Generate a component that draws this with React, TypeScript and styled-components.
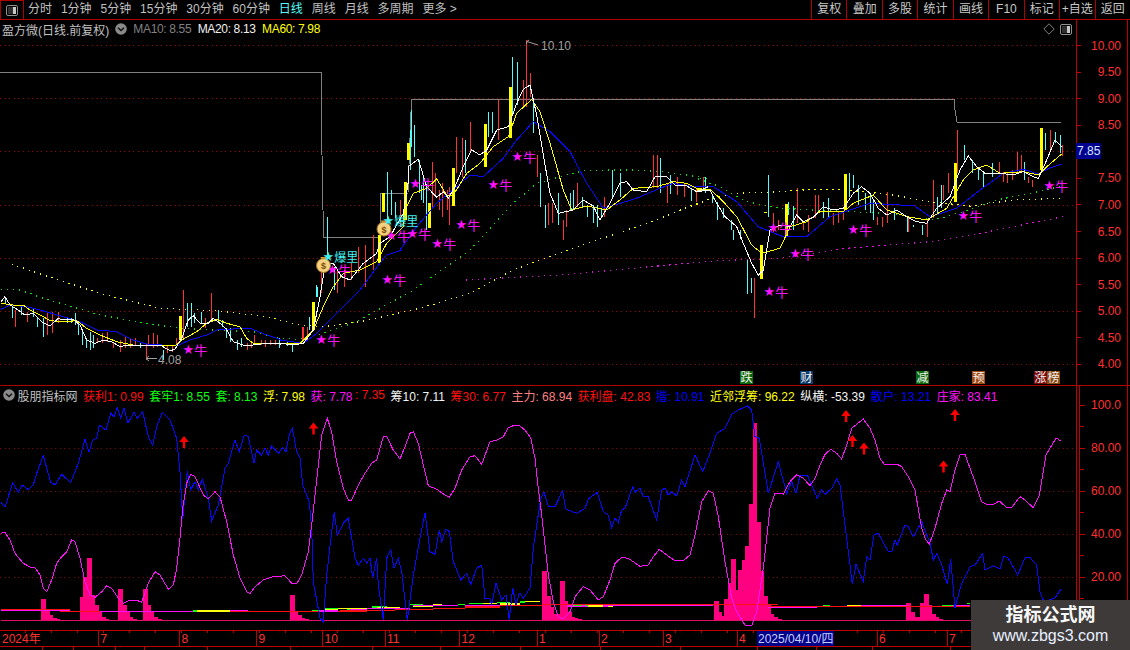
import React from "react";
import styled, { createGlobalStyle } from "styled-components";

type P = [number, number];
type W = [number, number, number];

const conv = (pts: number[][], ox: number, oy: number, xmin = -1e9, xmax = 1e9): P[] =>
  pts.filter((p) => p[0] >= xmin && p[0] <= xmax).map((p) => [ox + p[0] / 3, oy + p[1] / 3] as P);
const pts = (list: P[]) => list.map((p) => `${p[0].toFixed(1)},${p[1].toFixed(1)}`).join(" ");
const wicks = (list: W[], ox: number, oy: number) =>
  list.map((w) => `M${(ox + w[0] / 3).toFixed(0)}.5 ${(oy + w[1] / 3).toFixed(1)}V${(oy + w[2] / 3).toFixed(1)}`).join("");

/* ---------- price pane data ---------- */
const white = [
  ...conv([[3,125],[15,110],[30,135],[55,150],[75,165],[100,160],[125,185],[150,198],[175,175],[190,180],[220,178],[240,195],[260,240],[285,250],[310,240],[335,245],[360,260],[385,255],[425,258],[445,255],[480,255],[510,272],[525,268],[545,235],[565,180],[580,167],[600,190],[625,190],[640,175],[660,190],[680,210],[700,245],[730,255],[760,255],[800,250],[840,252]], 0, 260),
  ...conv([[0,640],[40,645],[70,640],[100,600],[120,500],[135,405],[160,400],[185,440],[210,450],[250,400],[290,370],[300,340],[330,320],[370,250],[385,155]], 280, 130),
  ...conv([[85,380],[115,358],[140,440],[170,472],[190,455],[205,475],[225,440],[250,380],[275,330],[300,345],[320,330],[350,270],[385,260],[410,190],[430,148],[450,135],[470,225],[490,345],[510,460],[535,520],[580,510],[610,480],[640,498],[660,540],[690,490],[720,430],[740,425],[760,450],[800,455],[825,410],[860,410],[885,435],[920,438],[950,455],[985,440]], 380, 40),
  ...conv([[50,185],[90,180],[110,220],[135,260],[170,290],[190,340],[215,400],[235,435],[250,420],[270,300],[300,285],[330,290],[350,255],[370,275],[400,262],[430,230],[460,240],[490,235],[520,190],[545,170],[570,190],[595,235],[620,255],[650,240],[680,260],[710,275],[740,280],[770,235],[810,200],[840,120],[865,78],[890,110],[915,130],[960,130],[1000,135],[1030,125],[1060,140],[1075,145],[1100,90],[1125,30],[1145,50]], 680, 130),
];
const yellow = [
  ...conv([[3,130],[40,135],[70,135],[90,150],[130,170],[150,182],[190,185],[230,182],[260,205],[300,225],[350,245],[400,255],[440,258],[480,255],[525,258],[545,240],[590,215],[620,190],[650,178],[680,190],[720,200],[740,235],[760,250],[840,252]], 0, 260),
  ...conv([[0,640],[60,640],[100,600],[130,530],[160,470],[190,430],[240,420],[290,395],[320,340],[370,290]], 280, 130),
  ...conv([[70,520],[100,460],[140,445],[170,417],[200,465],[220,465],[260,400],[300,370],[340,320],[385,290],[410,220],[455,178],[480,215],[510,310],[550,450],[575,510],[620,498],[680,510],[720,480],[760,445],[830,440],[880,425],[920,430],[950,445],[985,450]], 380, 40),
  ...conv([[50,180],[90,178],[125,210],[170,260],[215,345],[245,370],[300,355],[330,290],[380,275],[420,245],[490,245],[520,220],[580,195],[620,240],[680,260],[740,270],[800,235],[850,150],[880,120],[920,105],[960,130],[1030,125],[1075,135],[1100,110],[1145,72]], 680, 130),
];
const blue = [
  ...conv([[3,148],[30,135],[80,140],[120,150],[190,170],[240,185],[290,210],[350,215],[400,240],[440,252],[530,258],[570,240],[620,225],[650,210],[700,207],[750,205],[800,225],[840,238]], 0, 260),
  ...conv([[0,630],[70,640],[110,610],[170,550],[240,480],[300,400],[320,375],[365,360]], 280, 130),
  ...conv([[60,630],[110,560],[170,490],[230,440],[270,405],[310,410],[370,355],[410,300],[460,245],[510,275],[570,335],[620,430],[670,505],[720,490],[770,475],[840,445],[880,430],[940,440],[985,440]], 380, 40),
  ...conv([[50,170],[100,170],[170,215],[235,290],[310,320],[380,320],[450,260],[510,240],[570,220],[660,225],[700,225],[750,260],[830,235],[900,180],[970,130],[1030,118],[1075,132],[1100,118],[1145,102]], 680, 130),
];
const greenDots = [
  ...conv([[3,88],[60,90],[130,115],[300,165],[440,190],[540,205],[640,210],[760,215],[840,235]], 0, 260),
  ...conv([[50,628],[130,610],[230,575],[400,480],[550,375]], 280, 130),
  ...conv([[270,630],[400,490],[470,430],[540,410],[610,392],[690,390],[760,390],[850,395],[985,415]], 380, 40),
  ...conv([[50,145],[120,170],[200,215],[300,235],[400,240],[620,250],[760,270],[850,245],[950,210],[1100,180],[1150,165]], 680, 130),
];
const yellowDots = [
  ...conv([[35,12],[130,45],[300,100],[480,145],[650,152],[800,170],[900,195]], 0, 260),
  ...conv([[130,590],[240,575],[420,535],[570,490],[700,420],[840,368]], 280, 130),
  ...conv([[800,550],[985,480]], 380, 40),
  ...conv([[0,240],[80,210],[160,190],[300,185],[400,178],[500,180],[640,195],[750,215],[870,228],[1000,210],[1150,205]], 680, 130),
];
const purpleDots: P[] = [[466, 280], [560, 275], [680, 264], ...conv([[120,392],[300,385],[500,355],[750,335],[900,310],[1050,280],[1150,260]], 680, 130)];
const grayLine: P[] = [[0,72],[321,72],[321,100],[322,155],[323,210],[323.5,237],[380,237],[381,193],[408,193],[409,165],[411,112],[411.6,99.3],[954,99.3],[955,110],[957,122],[1061,122]];

const redZ9: W[] = [[45,150,200],[80,155,185],[142,155,225],[155,155,220],[175,155,190],[290,235,250],[305,220,250],[320,215,245],[340,245,265],[360,240,275],[375,230,265],[390,235,265],[405,235,255],[437,250,300],[445,225,255],[458,220,265],[470,225,260],[500,255,280],[515,255,275],[528,235,260],[550,90,240],[615,175,205],[633,100,185],[740,250,270],[752,245,265],[762,225,255],[782,240,255],[795,240,260],[810,240,255],[825,240,255],[908,200,240],[920,205,235],[962,30,100]];
const cyanZ9: W[] = [[15,110,130],[37,135,175],[62,140,165],[100,145,170],[110,170,200],[130,175,230],[200,175,190],[212,175,190],[225,160,195],[235,185,225],[247,215,255],[258,235,265],[270,215,270],[280,225,265],[420,245,265],[488,270,300],[562,130,200],[572,130,200],[583,160,190],[603,155,190],[655,150,190],[667,180,200],[677,205,235],[690,205,245],[710,240,270],[723,235,260],[838,235,265],[862,245,258],[877,250,275],[948,75,110]];
const redZ7: W[] = [[67,590,635],[80,590,630],[122,425,480],[172,420,490],[193,420,470],[213,400,450],[235,350,430],[255,345,470],[278,315,420],[360,210,290],[457,95,230],[466,130,200],[478,180,240],[487,230,260],[500,180,240],[508,228,285]];
const cyanZ7: W[] = [[37,645,665],[88,560,600],[110,470,500],[142,262,400],[163,410,480],[320,125,270],[333,180,255],[345,215,265],[390,0,120],[403,0,80],[422,165,210],[437,165,300]];
const redZ12: W[] = [[438,0,200],[430,120,200],[450,100,170],[355,180,300],[270,245,340],[245,295,410],[228,290,400],[207,440,555],[187,430,530],[157,365,470],[472,345,410],[505,490,555],[515,490,550],[548,540,600],[557,510,560],[590,430,500],[673,470,530],[820,345,445],[830,345,445],[862,430,490],[890,410,465],[912,430,470]];
const cyanZ12: W[] = [[397,50,225],[410,65,195],[460,175,280],[325,215,290],[335,215,280],[255,300,400],[130,410,490],[118,360,460],[103,255,340],[93,210,320],[480,400,500],[494,495,565],[535,460,555],[570,460,510],[578,450,510],[605,470,505],[620,495,530],[640,495,550],[650,495,560],[662,505,530],[695,390,470],[720,400,470],[840,355,460],[870,405,462]];
const redZ8: W[] = [[47,175,215],[68,140,175],[223,445,565],[278,250,310],[295,270,300],[350,175,280],[370,275,300],[385,255,305],[405,195,265],[415,195,250],[460,250,285],[475,245,280],[490,250,270],[592,260,285],[605,260,290],[620,185,280],[685,265,305],[740,270,320],[760,150,265],[790,165,210],[805,130,190],[832,0,130],[958,95,130],[970,125,155],[980,130,160],[995,120,150],[1010,65,130],[1023,75,125],[1043,140,160],[1055,150,170],[1110,0,60],[1147,45,78]];
const cyanZ8: W[] = [[33,178,213],[75,140,190],[97,195,218],[110,215,270],[130,235,265],[152,270,300],[160,300,330],[180,300,328],[201,390,492],[214,445,490],[265,135,260],[325,215,255],[340,228,300],[430,215,265],[445,205,265],[507,130,200],[520,135,175],[535,165,225],[555,190,240],[570,195,250],[580,210,270],[643,235,270],[680,265,305],[700,285,290],[727,285,315],[770,200,255],[783,165,235],[853,45,90],[875,90,130],[893,115,150],[908,130,170],[935,100,140],[1033,95,150],[1095,10,60],[1125,5,40],[1140,15,70]];
const redPath = wicks(redZ9, 0, 260) + wicks(redZ7, 280, 130) + wicks(redZ12, 380, 40) + wicks(redZ8, 680, 130);
const cyanPath = wicks(cyanZ9, 0, 260) + wicks(cyanZ7, 280, 130) + wicks(cyanZ12, 380, 40) + wicks(cyanZ8, 680, 130);

const signalBars: [number, number, number][] = [[180,316,340],[313,302,330],[379,235,263],[383,193,212],[405,182,220],[408,143,160],[429,203,228],[453,168,206],[485,124,167],[509.5,87,138],[761,245,279],[786,204,237],[845,174,210],[955,163,202],[1041,128,170]];
const bullMarks: P[] = [[387,279],[321,339],[332,269],[391,235],[412,233],[415,183],[437,243],[461,224],[493,184],[517,156],[773,227],[769,291],[795,253],[853,229],[963,215],[1049,185],[188,349]];
const stockGrid = [45.5, 98.5, 151.5, 205.5, 258.5, 311.5, 364.5];
const priceTicks = ["10.00","9.50","9.00","8.50","8.00","7.50","7.00","6.50","6.00","5.50","5.00","4.50","4.00"];
const tagBadges: { x: number; t: string; c: string }[] = [
  { x: 740, t: "跌", c: "#0a6a0a" }, { x: 800, t: "财", c: "#0b3a6b" }, { x: 916, t: "减", c: "#0a6a0a" },
  { x: 972, t: "预", c: "#a24a12" }, { x: 1034, t: "涨", c: "#7a0a0a" }, { x: 1047, t: "榜", c: "#8a4a14" },
];

/* ---------- indicator pane data ---------- */
const blueOsc = [
  ...conv([[3,322],[15,337],[38,263],[55,292],[67,270],[85,284],[100,270],[110,235],[130,182],[152,262],[165,270],[185,238],[212,263],[235,205],[255,133],[267,172],[278,135],[290,130],[298,90],[318,105],[332,55],[342,65],[352,38],[362,70],[372,40],[384,85],[402,52],[412,70],[428,50],[445,125],[458,152],[470,95],[487,52],[510,75],[530,130],[540,230],[548,372],[562,228],[572,285],[585,260],[595,285],[607,252],[625,310],[635,378],[655,330],[675,220],[685,205],[705,135],[718,170],[733,120],[745,125],[762,205],[770,165],[785,180],[795,160],[805,180],[815,152],[835,175],[848,158],[858,170],[868,118],[877,100],[890,170],[900,190],[908,270],[928,320],[935,400],[940,560],[960,670],[970,680],[980,540],[995,410],[1003,352],[1012,420],[1030,385],[1045,370],[1065,490],[1075,510],[1090,490],[1100,505],[1110,490],[1118,548],[1130,488],[1135,570],[1150,675],[1160,490],[1172,463],[1182,520],[1195,490],[1205,530],[1222,675],[1240,540],[1260,430],[1275,355],[1290,470],[1305,478],[1318,405],[1325,440],[1338,403],[1348,410],[1360,500],[1382,555],[1400,535],[1412,568],[1430,520],[1445,510],[1455,610],[1470,612],[1475,630],[1488,565],[1505,615],[1518,600],[1528,675],[1538,578],[1548,630],[1558,595]], 0, 395),
  ...conv([[0,595],[10,610],[30,580],[40,460],[62,310],[72,292],[85,333],[105,335],[128,287],[137,342],[170,355],[195,340],[205,312],[232,292],[250,350],[265,360],[275,398],[285,370],[295,383],[305,345],[315,340],[338,275],[345,292],[360,280],[370,305],[385,305],[410,375],[425,285],[435,280],[445,300],[455,290],[470,303],[485,255],[495,275],[525,180],[548,230],[570,175],[590,115],[615,100],[635,58],[655,45],[670,38],[682,32],[695,45],[705,125],[718,130],[745,295],[775,200],[800,295],[815,260],[828,295],[840,240],[862,240],[875,270],[892,310],[905,285],[915,298],[935,280],[950,252],[960,270],[980,430],[997,568],[1008,508],[1030,560],[1040,485],[1050,495],[1062,420],[1075,415],[1105,470],[1115,470],[1125,435],[1132,450],[1155,390],[1165,395],[1180,425],[1205,380],[1230,445],[1240,495],[1250,475],[1265,510],[1282,568],[1292,492],[1305,638],[1325,565],[1350,515],[1365,510],[1388,475],[1395,525],[1420,512],[1440,522],[1452,483],[1465,490],[1482,520],[1493,540],[1515,488],[1530,488],[1550,510],[1560,590]], 520, 395),
  [1044, 602] as P, [1055, 598] as P, [1061, 589] as P,
];
const magentaOsc = [
  ...conv([[3,415],[15,412],[30,435],[45,475],[70,505],[90,516],[105,518],[120,540],[130,580],[140,590],[155,555],[170,505],[185,485],[200,470],[215,435],[225,440],[240,490],[255,560],[270,600],[285,607],[305,590],[320,572],[335,580],[355,610],[370,625],[385,618],[410,616],[425,622],[445,565],[465,530],[480,540],[505,583],[520,570],[530,520],[540,430],[548,340],[560,265],[572,238],[585,245],[610,300],[625,312],[645,290],[660,305],[680,380],[700,480],[720,550],[740,590],[750,596],[765,575],[790,555],[815,546],[855,542],[875,565],[890,566],[905,540],[925,470],[935,390],[955,210],[965,120],[982,70],[995,110],[1010,200],[1030,280],[1045,315],[1055,315],[1075,270],[1095,235],[1115,205],[1130,195],[1150,125],[1160,125],[1180,165],[1200,192],[1215,155],[1230,115],[1240,110],[1255,145],[1270,210],[1285,272],[1310,283],[1335,300],[1348,307],[1365,280],[1385,225],[1410,185],[1425,182],[1445,208],[1470,140],[1490,135],[1510,125],[1525,98],[1540,92],[1558,92]], 0, 395),
  ...conv([[15,105],[32,128],[45,190],[55,280],[65,360],[85,540],[100,620],[115,665],[130,672],[150,650],[165,605],[190,575],[210,585],[235,615],[250,605],[270,555],[285,505],[305,487],[325,490],[360,514],[385,510],[400,485],[418,463],[440,480],[465,497],[490,497],[510,480],[525,420],[545,320],[565,287],[580,295],[595,365],[615,500],[635,610],[650,650],[675,690],[695,692],[710,650],[730,520],[750,340],[765,295],[790,297],[810,260],[830,240],[850,250],[870,272],[885,250],[900,210],[915,178],[932,163],[950,175],[965,192],[980,150],[995,100],[1030,72],[1050,100],[1065,135],[1080,190],[1095,210],[1130,207],[1145,215],[1165,245],[1185,285],[1205,400],[1215,430],[1228,448],[1245,400],[1265,325],[1280,285],[1290,290],[1305,225],[1320,180],[1335,178],[1350,220],[1365,260],[1385,320],[1400,328],[1420,328],[1438,318],[1460,338],[1475,338],[1500,305],[1515,315],[1540,338],[1558,300]], 520, 395),
  [1046, 455] as P, [1056, 438] as P, [1061, 441] as P,
];
type Bar = [number, number, number];
const barsA: Bar[] = [[123,138,612],[138,150,645],[150,160,660],[160,170,668],[170,180,673],[240,250,605],[250,262,545],[262,275,490],[275,285,600],[285,297,630],[297,307,650],[307,317,665],[317,327,672],[354,369,582],[369,380,630],[380,390,650],[390,400,666],[400,411,672],[430,445,582],[445,453,630],[453,463,650],[463,475,665],[475,485,672],[870,885,600],[885,895,650],[895,905,660],[905,915,668],[915,927,673]];
const barsB: Bar[] = [[66,81,528],[81,93,603],[93,103,635],[103,120,657],[120,135,558],[135,145,618],[145,155,650],[155,165,665],[165,175,670],[175,185,673],[582,597,618],[597,606,650],[606,612,662],[612,625,612],[625,633,565],[633,648,492],[648,654,585],[654,666,525],[666,676,495],[676,687,453],[687,698,327],[698,711,84],[711,722,380],[722,732,527],[732,743,603],[743,753,630],[753,763,658],[763,775,667],[775,785,673],[1158,1172,624],[1172,1186,652],[1186,1199,666],[1199,1212,624],[1212,1226,597],[1226,1236,630],[1236,1248,658],[1248,1258,666],[1258,1270,673]];
type Seg = [number, number, number, string];
const R = "#ff1010", M = "#ff10ff", Y = "#ffff10", G = "#10ff10";
const segsA: Seg[] = [[180,935,649,R],[3,210,645,R],[3,210,647,M],[300,580,649,M],[580,690,648,Y],[580,590,648,G],[690,745,647,M],[935,1020,650,R],[1020,1100,648,R],[1100,1185,646,R],[1185,1300,643,R],[1300,1395,640,R],[1395,1500,636,R],[1500,1560,632,R],[935,960,646,G],[975,1015,641,G],[975,1015,645,Y],[960,1015,648,M],[1015,1100,641,Y],[1040,1060,644,G],[1050,1100,644,M],[1115,1160,636,G],[1130,1200,638,Y],[1100,1230,640,M],[1230,1270,628,G],[1240,1300,633,Y],[1300,1325,628,Y],[1240,1375,632,M],[1375,1395,628,G],[1408,1450,625,G],[1450,1490,625,Y],[1395,1500,631,M],[1490,1530,622,G],[1500,1560,627,Y]];
const segsB: Seg[] = [[0,15,621,G],[15,60,619,Y],[0,66,631,R],[66,775,628,R],[140,280,633,M],[160,185,632,G],[195,210,632,G],[205,250,633,Y],[265,280,633,Y],[265,580,632,M],[745,890,637,M],[745,1350,634,R],[910,930,632,G],[980,1022,632,Y],[1022,1160,632,M],[1265,1300,632,G],[1340,1350,626,G],[1300,1350,631,M]];
const arrows: P[] = [[184,442],[313.5,428.5],[846,416],[852.5,441],[864,448.5],[955,415],[943.5,466.5]];
const oscGrid = [448.5, 491.5, 534.5, 577.5];
const oscTicks: [string, number][] = [["100.0",405],["80.00",448],["60.00",491],["40.00",534],["20.00",577]];

/* ---------- date axis data ---------- */
const monthMarks: [string, number][] = [["2024年",0],["7",98.4],["8",179.5],["9",256.6],["10",322.5],["11",385],["12",459.5],["1",537],["2",599],["3",663],["4",737],["6",877],["7",947]];
const minorTicks = Array.from({ length: 41 }, (_, i) => 25 + i * 26);
const footerMarks = [42, 73, 115, 144, 207, 290, 372, 440, 520, 600, 680, 757, 816, 872, 950];

const legendMain = [
  { t: "MA10: 8.55", c: "#808080" }, { t: "MA20: 8.13", c: "#f0f0f0" }, { t: "MA60: 7.98", c: "#ffff10" },
];
const legendOsc = [
  { t: "获利1: 0.99", c: "#ff1010" }, { t: "套牢1: 8.55", c: "#10ff10" }, { t: "套: 8.13", c: "#10ff10" },
  { t: "浮: 7.98", c: "#ffff10" }, { t: "获: 7.78", c: "#ff10ff" }, { t: ": 7.35", c: "#ff1010", tight: true },
  { t: "筹10: 7.11", c: "#f4f4f4" }, { t: "筹30: 6.77", c: "#ff1010" }, { t: "主力: 68.94", c: "#ff8080" },
  { t: "获利盘: 42.83", c: "#ff1010" }, { t: "揩: 10.91", c: "#0000ff" }, { t: "近邻浮筹: 96.22", c: "#ffff10" },
  { t: "纵横: -53.39", c: "#f4f4f4" }, { t: "散户: 13.21", c: "#0000ff" }, { t: "庄家: 83.41", c: "#ff10ff" },
];
const periodTabs = ["分时", "1分钟", "5分钟", "15分钟", "30分钟", "60分钟", "日线", "周线", "月线", "多周期", "更多 >"];
const actions = ["复权", "叠加", "多股", "统计", "画线", "F10", "标记", "+自选", "返回"];

/* ---------- styles ---------- */
const FONT = `"Liberation Sans", "Noto Sans CJK SC", sans-serif`;
const Global = createGlobalStyle`
  html, body { margin: 0; padding: 0; background: #000; }
  body { font-family: ${FONT}; }
`;
const Screen = styled.div`
  position: relative; width: 1130px; height: 650px; background: #000; overflow: hidden;
  display: flex; flex-direction: column; color: #c8c8c8; font-size: 12px;
`;
const Toolbar = styled.header`
  height: 20px; flex: none; box-sizing: border-box; border-bottom: 1px solid #b00000;
  display: flex; align-items: stretch;
`;
const PanelToggle = styled.button`
  width: 24px; box-sizing: border-box; padding: 0; background: #000; border: 1px solid #b00000; border-bottom: 0;
  display: flex; align-items: center; justify-content: center;
`;
const PeriodTabs = styled.nav`
  display: flex; align-items: center; gap: 8.9px; padding-left: 4px; flex: 1;
`;
const PeriodTab = styled.span<{ $active?: boolean }>`
  font-size: 12px; line-height: 19px; white-space: nowrap; color: ${(p) => (p.$active ? "#54fcfc" : "#c0c0c0")};
`;
const ActionGroup = styled.div`
  display: flex; width: 319px; flex: none;
`;
const ActionButton = styled.span`
  flex: 1 0 35px; box-sizing: border-box; border-left: 1px solid #b00000; text-align: center;
  line-height: 18px; font-size: 12px; color: #c8c8c8; white-space: nowrap;
`;
const PriceRow = styled.section`
  height: 365px; flex: none; display: flex;
`;
const OscRow = styled.section`
  height: 245px; flex: none; display: flex; box-sizing: border-box; border-top: 1px solid #b00000;
`;
const ChartColumn = styled.div`
  width: 1076px; flex: none; display: flex; flex-direction: column;
`;
const LegendBar = styled.div<{ $gap: number; $pad: number }>`
  height: 18px; flex: none; display: flex; align-items: center; gap: ${(p) => p.$gap}px; padding: 0 3px 0 ${(p) => p.$pad}px;
  font-size: 12px; white-space: nowrap;
`;
const LegendTitle = styled.span<{ $pull?: number }>`
  color: #c0c0c0; margin-left: ${(p) => p.$pull ?? 0}px;
`;
const MaValue = styled.span<{ $c: string }>`
  color: ${(p) => p.$c}; letter-spacing: -0.35px; margin-left: 1px;
`;
const LegendValue = styled.span<{ $c: string; $tight?: boolean }>`
  color: ${(p) => p.$c}; margin-left: ${(p) => (p.$tight ? "-3px" : "0")};
`;
const CornerIcons = styled.div`
  margin-left: auto; display: flex; align-items: center; gap: 5px; padding-right: 1px;
`;
const PlotSvg = styled.svg`
  display: block; flex: none; background: #000;
`;
const AxisSvg = styled.svg`
  display: block; flex: none; width: 54px; background: #000;
`;
const BareIcon = styled.svg`
  display: block; flex: none;
`;
const ChartLine = styled.polyline<{ $c: string; $w?: number; $dash?: string }>`
  fill: none; stroke: ${(p) => p.$c}; stroke-width: ${(p) => p.$w ?? 1}; stroke-dasharray: ${(p) => p.$dash ?? "none"};
  shape-rendering: crispEdges;
`;
const Wicks = styled.path<{ $c: string }>`
  fill: none; stroke: ${(p) => p.$c}; stroke-width: 1; shape-rendering: crispEdges;
`;
const GridLine = styled.line`
  stroke: #a80000; stroke-width: 1; stroke-dasharray: 1 3.6; shape-rendering: crispEdges;
`;
const OscGridLine = styled(GridLine)`
  stroke: #900000;
`;
const RedRule = styled.line<{ $w?: number }>`
  stroke: #c00000; stroke-width: ${(p) => p.$w ?? 1}; shape-rendering: crispEdges;
`;
const SignalBar = styled.rect`
  fill: #ffff00; shape-rendering: crispEdges;
`;
const PinkBar = styled.rect`
  fill: #ff0080; shape-rendering: crispEdges;
`;
const BandSeg = styled.line<{ $c: string }>`
  stroke: ${(p) => p.$c}; stroke-width: 1.6; shape-rendering: crispEdges;
`;
const BaseRule = styled.line`
  stroke: #e0106a; stroke-width: 1; shape-rendering: crispEdges;
`;
const AxisText = styled.text`
  fill: #ff3030; font-family: ${FONT}; font-size: 12px; text-anchor: end; dominant-baseline: central;
`;
const PeakText = styled.text`
  fill: #a0a0a0; font-family: ${FONT}; font-size: 12px; dominant-baseline: central;
`;
const BullText = styled.text`
  fill: #ff10ff; font-family: "Noto Sans CJK SC", sans-serif; font-size: 13px; dominant-baseline: central;
`;
const BurstText = styled.text`
  fill: #40f0f0; font-family: "Noto Sans CJK SC", sans-serif; font-size: 12px; dominant-baseline: central;
`;
const StarSpan = styled.tspan`
  font-family: "DejaVu Sans", sans-serif; font-size: 13px;
`;
const BagSign = styled.text`
  fill: #7a4a00; font-family: ${FONT}; font-weight: 700; font-size: 9px; text-anchor: middle; dominant-baseline: central;
`;
const BadgeBox = styled.rect<{ $c: string }>`
  fill: ${(p) => p.$c};
`;
const BadgeText = styled.text`
  fill: #f0f0f0; font-family: ${FONT}; font-size: 12px; text-anchor: middle; dominant-baseline: central;
`;
const PriceTagBox = styled.rect`
  fill: #000090;
`;
const PriceTagText = styled.text`
  fill: #d8e8ff; font-family: ${FONT}; font-size: 12px; dominant-baseline: central;
`;
const DateAxisSvg = styled.svg`
  display: block; flex: none; background: #000;
`;
const DateText = styled.text`
  fill: #ff3030; font-family: ${FONT}; font-size: 12px; dominant-baseline: central;
`;
const CursorBox = styled.rect`
  fill: #000088;
`;
const CursorText = styled.text`
  fill: #c8d0ff; font-family: ${FONT}; font-size: 12px; dominant-baseline: central;
`;
const Watermark = styled.aside`
  position: absolute; left: 971px; top: 600px; width: 159px; height: 50px; background: #3e3a3a;
  display: flex; flex-direction: column; align-items: center; justify-content: flex-start;
`;
const WatermarkTitle = styled.div`
  font-size: 18px; line-height: 22px; margin-top: 4px; font-weight: 700; color: #f8f8f8;
`;
const WatermarkUrl = styled.div`
  font-size: 16px; line-height: 20px; margin-top: 0; color: #e8f0ff;
`;

const ChevronDisc = () => (
  <BareIcon width="12" height="12" viewBox="0 0 12 12">
    <circle cx="6" cy="6" r="5.8" fill="#8a8a8a" />
    <path d="M3 4.8 L6 7.6 L9 4.8" fill="none" stroke="#101010" strokeWidth="1.4" />
  </BareIcon>
);
const PanelGlyph = () => (
  <BareIcon width="12" height="11" viewBox="0 0 12 11">
    <rect x="0.5" y="0.5" width="11" height="10" rx="1.5" fill="#000" stroke="#909090" />
    <rect x="7" y="2" width="3" height="7" fill="#c8c8c8" />
    <rect x="2" y="2" width="5" height="7" fill="#303030" />
  </BareIcon>
);
const Diamond = () => (
  <BareIcon width="12" height="12" viewBox="0 0 12 12">
    <path d="M6 .8 L11.2 6 L6 11.2 L.8 6 Z" fill="none" stroke="#808080" />
  </BareIcon>
);
const MoneyBag = ({ x, y }: { x: number; y: number }) => (
  <g transform={`translate(${x} ${y})`}>
    <path d="M-3 -8.5 L3 -8.5 L1.8 -5 L-1.8 -5 Z" fill="#d8a020" />
    <circle r="7" cy="0" fill="#f4d080" stroke="#a87820" />
    <BagSign y="0.5">$</BagSign>
  </g>
);

const PriceChart = () => (
  <PlotSvg width="1076" height="347" viewBox="0 38 1076 347">
    {stockGrid.map((y) => <GridLine key={y} x1="0" x2="1076" y1={y} y2={y} />)}
    <ChartLine points={pts(grayLine)} $c="#808080" />
    <Wicks d={redPath} $c="#ff3232" />
    <Wicks d={cyanPath} $c="#54fcfc" />
    {signalBars.map((b) => <SignalBar key={b[0]} x={Math.round(b[0]) - 1} y={b[1]} width="3" height={b[2] - b[1]} />)}
    <SignalBar x="764" y="212" width="3" height="1" />
    <ChartLine points={pts(purpleDots)} $c="#e010e0" $w={1.2} $dash="1.2 4.8" />
    <ChartLine points={pts(yellowDots)} $c="#ffff10" $w={1.2} $dash="1.2 4.8" />
    <ChartLine points={pts(greenDots)} $c="#10e010" $w={1.2} $dash="1.2 4.8" />
    <ChartLine points={pts(blue)} $c="#0808ff" />
    <ChartLine points={pts(yellow)} $c="#ffff00" />
    <ChartLine points={pts(white)} $c="#ffffff" />
    <path d="M538 45 L527 41.5 L526.5 44 M527 41.5 L529 40" fill="none" stroke="#a0a0a0" />
    <PeakText x="541" y="45.5">10.10</PeakText>
    <path d="M157 358.5 H146 L149 356 M146 358.5 L149 361" fill="none" stroke="#a0a0a0" />
    <PeakText x="158" y="359.5">4.08</PeakText>
    {bullMarks.map((m) => (
      <BullText key={`${m[0]}-${m[1]}`} x={m[0] - 5.5} y={m[1]}><StarSpan>★</StarSpan>牛</BullText>
    ))}
    <MoneyBag x={323.5} y={265.5} />
    <MoneyBag x={384} y={229} />
    <BurstText x="322.5" y="256"><StarSpan>★</StarSpan>爆里</BurstText>
    <BurstText x="382.5" y="220"><StarSpan>★</StarSpan>爆里</BurstText>
    {tagBadges.map((b) => (
      <g key={b.t}>
        <BadgeBox x={b.x} y="371" width="13" height="13" $c={b.c} />
        <BadgeText x={b.x + 6.5} y="377.5">{b.t}</BadgeText>
      </g>
    ))}
  </PlotSvg>
);

const PriceAxis = () => (
  <AxisSvg height="365" viewBox="1076 20 54 365">
    <RedRule x1="1076.5" x2="1076.5" y1="20" y2="385" />
    <RedRule x1="1127.5" x2="1127.5" y1="20" y2="385" />
    {priceTicks.map((t, i) => {
      const y = 45.5 + i * 26.58;
      return (
        <g key={t}>
          <RedRule x1="1076" x2="1081" y1={y} y2={y} />
          {t !== "8.00" && <AxisText x="1121" y={y}>{t}</AxisText>}
        </g>
      );
    })}
    <PriceTagBox x="1076" y="143" width="25" height="16" />
    <PriceTagText x="1077" y="151">7.85</PriceTagText>
  </AxisSvg>
);

const OscChart = () => (
  <PlotSvg width="1076" height="226" viewBox="0 404 1076 226">
    {oscGrid.map((y) => <OscGridLine key={y} x1="0" x2="1076" y1={y} y2={y} />)}
    {[...barsA.map((b) => [b[0], b[1], b[2]]), ...barsB.map((b) => [b[0] + 1560, b[1] + 1560, b[2]])].map((b) => (
      <PinkBar key={b[0]} x={b[0] / 3} y={395 + b[2] / 3} width={(b[1] - b[0]) / 3} height={(677 - b[2]) / 3} />
    ))}
    {segsA.map((s, i) => <BandSeg key={`a${i}`} x1={s[0] / 3} x2={s[1] / 3} y1={395 + s[2] / 3} y2={395 + s[2] / 3} $c={s[3]} />)}
    {segsB.map((s, i) => <BandSeg key={`b${i}`} x1={520 + s[0] / 3} x2={520 + s[1] / 3} y1={395 + s[2] / 3} y2={395 + s[2] / 3} $c={s[3]} />)}
    <BaseRule x1="1" x2="1000" y1="620.5" y2="620.5" />
    <ChartLine points={pts(blueOsc)} $c="#0808ff" />
    <ChartLine points={pts(magentaOsc)} $c="#ff10ff" />
    {arrows.map((a) => (
      <path key={a[0]} transform={`translate(${a[0]} ${a[1]})`} d="M0 -6 L4.8 0 L1.2 0 L1.2 6 L-1.2 6 L-1.2 0 L-4.8 0 Z" fill="#ff0000" />
    ))}
  </PlotSvg>
);

const OscAxis = () => (
  <AxisSvg height="244" viewBox="1076 386 54 244">
    <RedRule x1="1076" x2="1076" y1="386" y2="630" $w={2} />
    <RedRule x1="1079" x2="1079" y1="386" y2="630" />
    <RedRule x1="1127.5" x2="1127.5" y1="386" y2="630" />
    {oscTicks.map(([t, y]) => (
      <g key={t}>
        <RedRule x1="1079" x2="1085" y1={y} y2={y} />
        <RedRule x1="1079" x2="1084" y1={y + 21.5} y2={y + 21.5} />
        <AxisText x="1121" y={y}>{t}</AxisText>
      </g>
    ))}
  </AxisSvg>
);

const DateAxis = () => (
  <DateAxisSvg width="1130" height="17" viewBox="0 630 1130 17">
    <RedRule x1="0" x2="1130" y1="630.5" y2="630.5" />
    <RedRule x1="0" x2="1130" y1="646.5" y2="646.5" />
    {minorTicks.map((x) => <RedRule key={x} x1={x} x2={x} y1="630" y2="632.5" />)}
    {monthMarks.map(([t, x], i) => (
      <g key={`${t}${i}`}>
        {x > 0 && <RedRule x1={x} x2={x} y1="630" y2="647" />}
        <DateText x={x + 2} y="639">{t}</DateText>
      </g>
    ))}
    <CursorBox x="757" y="631" width="77" height="15" />
    <CursorText x="758" y="639">2025/04/10/四</CursorText>
  </DateAxisSvg>
);

const FooterTicks = () => (
  <DateAxisSvg width="1130" height="3" viewBox="0 647 1130 3">
    {footerMarks.map((x) => <RedRule key={x} x1={x} x2={x} y1="647" y2="650" />)}
  </DateAxisSvg>
);

export default function App() {
  return (
    <Screen>
      <Global />
      <Toolbar>
        <PanelToggle aria-label="panel"><PanelGlyph /></PanelToggle>
        <PeriodTabs>
          {periodTabs.map((t) => <PeriodTab key={t} $active={t === "日线"}>{t}</PeriodTab>)}
        </PeriodTabs>
        <ActionGroup>
          {actions.map((a) => <ActionButton key={a}>{a}</ActionButton>)}
        </ActionGroup>
      </Toolbar>
      <PriceRow>
        <ChartColumn>
          <LegendBar $gap={5.5} $pad={2}>
            <LegendTitle>盈方微(日线.前复权)</LegendTitle>
            <ChevronDisc />
            {legendMain.map((l) => <MaValue key={l.t} $c={l.c}>{l.t}</MaValue>)}
            <CornerIcons><Diamond /><PanelGlyph /></CornerIcons>
          </LegendBar>
          <PriceChart />
        </ChartColumn>
        <PriceAxis />
      </PriceRow>
      <OscRow>
        <ChartColumn>
          <LegendBar $gap={5.5} $pad={3}>
            <ChevronDisc />
            <LegendTitle $pull={-3}>股朋指标网</LegendTitle>
            {legendOsc.map((l) => <LegendValue key={l.t} $c={l.c} $tight={l.tight}>{l.t}</LegendValue>)}
          </LegendBar>
          <OscChart />
        </ChartColumn>
        <OscAxis />
      </OscRow>
      <DateAxis />
      <FooterTicks />
      <Watermark>
        <WatermarkTitle>指标公式网</WatermarkTitle>
        <WatermarkUrl>www.zbgs3.com</WatermarkUrl>
      </Watermark>
    </Screen>
  );
}
